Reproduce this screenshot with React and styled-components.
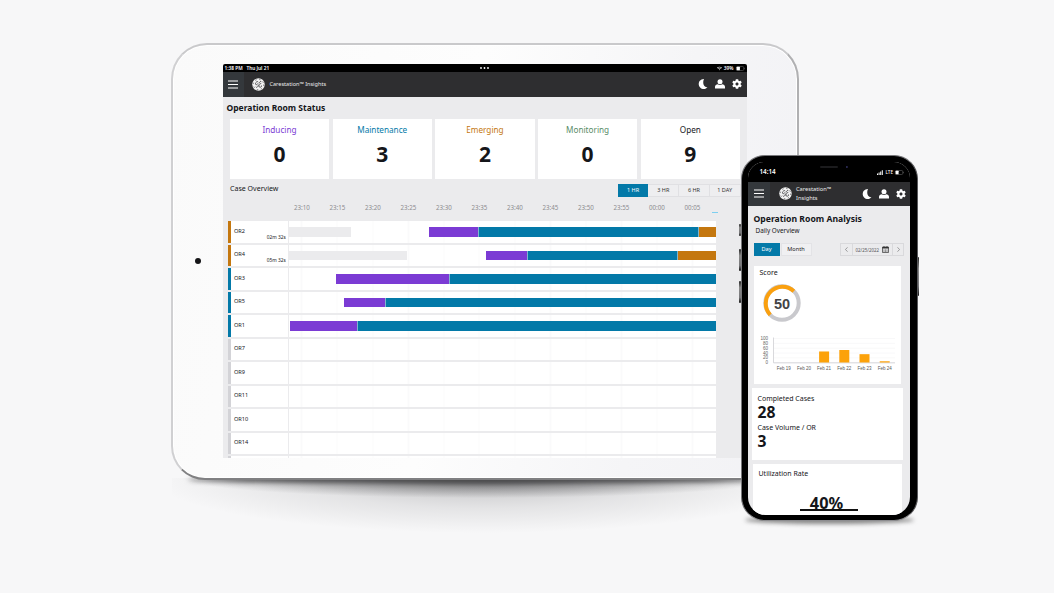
import React from "react"
import styled, { createGlobalStyle } from "styled-components"
import { FaCog, FaWifi } from "react-icons/fa"

const purple = "#7b3bd4"
const blue = "#0379a8"
const orange = "#c4770f"
const grey = "#ebebed"

const GlobalStyle = createGlobalStyle`
  * {
    box-sizing: border-box;
  }

  body {
    margin: 0;
    background: #f7f7f8;
    font-family: "Noto Sans", "Open Sans", sans-serif;
    color: #15161a;
  }
`

const Stage = styled.main`
  position: relative;
  width: 1054px;
  height: 593px;
  overflow: hidden;
  padding: 43px 0 0 171px;
  background: #f7f7f8;
`
const Tablet = styled.section`
  position: relative;
  width: 628px;
  height: 437px;
  padding: 19px 50px 0 49.5px;
  border: 2px solid;
  border-color: #c9c9cb #b0b0b2 #808082 #d0d0d2;
  border-radius: 36px 36px 32px 34px;
  background: linear-gradient(100deg, #fafafa 0%, #fdfdfd 45%, #f5f5f7 75%, #f2f2f5 100%);
  box-shadow: inset 0 0 0 1px #fff;
`
/* wide soft fall-off under the tablet with a darker line at the edge */
const TabletShadow = styled.div`
  position: absolute;
  left: 172px;
  top: 478px;
  width: 620px;
  height: 60px;
  background:
    radial-gradient(ellipse 300px 20px at 50% 0, rgba(40, 40, 42, 0.75), rgba(40, 40, 42, 0.35) 45%, transparent),
    radial-gradient(ellipse 330px 55px at 50% 0, rgba(90, 90, 94, 0.35), rgba(90, 90, 94, 0.12) 55%, transparent);
`
const EdgeShadow = styled.div`
  position: absolute;
  left: 188px;
  top: 476px;
  width: 575px;
  height: 7px;
  border-radius: 50% / 4px;
  background: #4a4a4c;
  filter: blur(2.5px);
`
const Camera = styled.i`
  position: absolute;
  left: 22px;
  top: 213px;
  width: 6px;
  height: 6px;
  border-radius: 50%;
  background: #151517;
`
const Screen = styled.div`
  display: flex;
  flex-direction: column;
  width: 524px;
  height: 394px;
  overflow: hidden;
  border-radius: 2px 2px 0 0;
  background: ${grey};

  & > * {
    flex: none;
  }
`
const StatusBar = styled.div`
  display: grid;
  grid-template-columns: 1fr auto 1fr;
  align-items: center;
  height: 8px;
  padding: 0 2px;
  background: #000;
  color: #fff;
  font-size: 4.8px;
  font-weight: 600;
  line-height: 8px;
  white-space: pre;
`
const StatusRight = styled.span`
  display: flex;
  align-items: center;
  justify-content: flex-end;
  gap: 2px;
`
const HeaderBar = styled.header`
  display: flex;
  align-items: center;
  height: 24.5px;
  padding-right: 4.5px;
  background: #2e2e30;
  color: #fff;
`
const MenuButton = styled.div`
  display: grid;
  place-items: center;
  align-self: stretch;
  width: ${(p) => (p.$phone ? "22px" : "21px")};
  background: #34383c;
`
const Brand = styled.div`
  display: flex;
  align-items: center;
  flex: 1;
  gap: 4.5px;
  padding-left: ${(p) => (p.$phone ? "9px" : "8.5px")};
  font-size: ${(p) => (p.$phone ? "5.7px" : "5.55px")};
  line-height: 9px;
  color: #ececec;
`
const Actions = styled.div`
  display: flex;
  align-items: center;
  gap: 7px;
`
const Title = styled.h1`
  margin: 0;
  font-size: ${(p) => (p.$phone ? "8.65px" : "8.5px")};
  line-height: 12px;
  font-weight: 700;
  white-space: nowrap;
`
const TabletTitle = styled(Title)`
  height: 22.5px;
  padding: 5.5px 0 4px 4px;
`
const Stats = styled.div`
  display: grid;
  grid-template-columns: repeat(5, 99.3px);
  gap: 3.4px;
  height: 59.5px;
  padding-left: 7.4px;
`
const Stat = styled.div`
  padding-top: 5px;
  background: #fff;
  text-align: center;
`
const StatLabel = styled.div`
  font-size: 8.2px;
  line-height: 12px;
  color: ${(p) => p.$color};
`
const StatValue = styled.div`
  margin-top: 5px;
  font-size: 21px;
  line-height: 27px;
  font-weight: 700;
`
const OverviewBar = styled.div`
  display: flex;
  justify-content: space-between;
  align-items: flex-start;
  height: 24px;
  padding: 4.5px 6px 0 7.5px;
  font-size: 7.05px;
  line-height: 11px;
`
const Ranges = styled.div`
  display: flex;
  margin-top: 1px;
  height: 13px;
`
const Range = styled.span`
  width: 30.7px;
  border: 1px solid ${(p) => (p.$active ? blue : "#e0e0e3")};
  border-left-width: ${(p) => (p.$active ? "1px" : "0")};
  background: ${(p) => (p.$active ? blue : "#eeeef0")};
  color: ${(p) => (p.$active ? "#fff" : "#333")};
  font-size: 5.5px;
  line-height: 11px;
  text-align: center;
`
const Times = styled.div`
  display: grid;
  grid-template-columns: repeat(12, 35.5px);
  height: 18.5px;
  padding-left: 61.6px;
  font-size: 6.2px;
  line-height: 10px;
  text-align: center;
  color: #8b8b90;
`
const Now = styled.i`
  position: absolute;
  left: 539px;
  top: 167px;
  width: 6px;
  height: 1px;
  background: #7dcff0;
`
const Rows = styled.div`
  display: flex;
  flex-direction: column;
  gap: 2px;
  padding-left: 5.5px;
`
const Row = styled.div`
  display: grid;
  grid-template-columns: 3px 58.3px 426.5px;
  height: 21.5px;
  flex: none;
`
const Marker = styled.i`
  background: ${(p) => p.$color};
`
const Room = styled.div`
  display: flex;
  flex-direction: column;
  padding: 5.5px 2.5px 0 3px;
  background: #fff;
  border-right: 1px solid ${grey};
  font-size: 5.6px;
  line-height: 8px;
`
const Elapsed = styled.span`
  align-self: flex-end;
  font-size: 4.8px;
  line-height: 5px;
`
/* faint tick every five minutes */
const Track = styled.div`
  display: grid;
  grid-template-columns: ${(p) => p.$columns};
  align-items: center;
  background:
    repeating-linear-gradient(90deg, #fafafb 0 1px, transparent 1px 35.5px) 12.5px 0,
    #fff;
`
const Segment = styled.i`
  height: 9.5px;
  background: ${(p) => p.$color};
  border-right: ${(p) => (p.$color === grey ? "0" : "1px solid #7fb6cf")};

  &:last-child {
    border-right: 0;
  }
`
const Phone = styled.section`
  position: absolute;
  left: 741px;
  top: 155px;
  width: 177px;
  height: 366px;
  padding: 6px 7px 5px 5.5px;
  border: 1.5px solid;
  border-color: #77777a #58585b #8d8d90 #77777a;
  border-radius: 24px;
  background: #000;
`
const PhoneShadow = styled.div`
  position: absolute;
  left: 745px;
  top: 516px;
  width: 169px;
  height: 8px;
  border-radius: 50%;
  background: #888;
  filter: blur(2px);
`
const SideButton = styled.i`
  position: absolute;
  left: ${(p) => p.$left}px;
  top: ${(p) => p.$top}px;
  width: 2px;
  height: ${(p) => p.$height}px;
  border-radius: 1px;
  background: linear-gradient(#222, #888 30%, #77777a 75%, #111);
`
const PhoneScreen = styled.div`
  display: flex;
  flex-direction: column;
  height: 100%;
  overflow: hidden;
  border-radius: 16px 16px 18px 18px;
  background: ${grey};

  & > * {
    flex: none;
  }
`
const PhoneStatus = styled.div`
  display: grid;
  grid-template-columns: 1fr 32px 1fr;
  height: 19.5px;
  padding: 0 6px 0 12px;
  background: #000;
  color: #fff;
  font-size: 6.3px;
  line-height: 20px;
  font-weight: 600;
`
const Speaker = styled.i`
  display: flex;
  height: 2px;
  margin-top: 3.5px;
  border-right: 2.5px solid #27274e;
  border-radius: 1px;

  &::before {
    content: "";
    width: 18px;
    margin-left: 4px;
    background: #1b1b1d;
    border-radius: 1px;
  }
`
const Signal = styled(StatusRight)`
  font-size: 4.6px;
  font-weight: 500;
`
const PhoneIntro = styled.div`
  height: 36.5px;
  padding: 7px 0 0 6px;
`
const Daily = styled.div`
  padding: 1px 0 0 2px;
  font-size: 6.35px;
  line-height: 10px;
`
const Controls = styled.div`
  display: flex;
  justify-content: space-between;
  align-items: center;
  height: 14px;
  padding: 0 6px 0 6px;
`
const Toggles = styled.div`
  display: flex;
  gap: 1px;
`
const Toggle = styled.span`
  width: ${(p) => (p.$active ? "26px" : "31px")};
  height: 13.5px;
  border: 1px solid ${(p) => (p.$active ? blue : "#e3e3e6")};
  background: ${(p) => (p.$active ? blue : "#f0f0f2")};
  color: ${(p) => (p.$active ? "#fff" : "#222")};
  font-size: 5.6px;
  line-height: 11px;
  text-align: center;
`
const DatePicker = styled.div`
  display: grid;
  grid-template-columns: 11px 1fr 11px;
  width: 64px;
  height: 12.5px;
  border: 1px solid #d9d9dc;
  color: #55565a;
  font-size: 4.4px;
`
const DateCell = styled.span`
  display: flex;
  align-items: center;
  justify-content: center;
  gap: 3.5px;

  & + & {
    border-left: 1px solid #d9d9dc;
  }
`
const Card = styled.div`
  background: #fff;
  font-size: 7px;
  line-height: 10px;
`
const ScoreCard = styled(Card)`
  height: 118px;
  margin: 9px 9.5px 0 6px;
  padding: 2px 0 0 6px;
`
const CasesCard = styled(Card)`
  height: 71.5px;
  margin: 4.5px 7.5px 0 4.5px;
  padding: 5.5px 0 0 5.5px;
`
const Figure = styled.div`
  margin-bottom: 1.5px;
  font-size: 15.7px;
  line-height: 17.5px;
  font-weight: 700;
`
const RateCard = styled(Card)`
  height: 60px;
  margin: 4px 8.5px 0 5.5px;
  padding: 5.5px 0 0 5.5px;
`
const Rate = styled.div`
  width: 58px;
  height: 18.5px;
  margin: 13.5px 0 0 41px;
  padding-right: 4px;
  border-bottom: 2px solid #111;
  font-size: 16.3px;
  line-height: 21.5px;
  font-weight: 700;
  text-align: center;
`
const Svg = styled.svg`
  display: block;
  flex: none;
  overflow: visible;
`
const GaugeSvg = styled(Svg)`
  margin: 6px 0 0 3.5px;
  font: 700 14.5px "Liberation Sans", sans-serif;
`
const ChartSvg = styled(Svg)`
  margin-top: 12px;
  font: 4.5px "Liberation Sans", sans-serif;
`

const stats = [
  { label: "Inducing", value: 0, color: purple },
  { label: "Maintenance", value: 3, color: blue },
  { label: "Emerging", value: 2, color: orange },
  { label: "Monitoring", value: 0, color: "#588c68" },
  { label: "Open", value: 9, color: "#15161a" },
]

const times = [
  "23:10", "23:15", "23:20", "23:25", "23:30", "23:35",
  "23:40", "23:45", "23:50", "23:55", "00:00", "00:05",
]

// segments are [width, color], the last one fills the track
const rows = [
  { name: "OR2", mark: orange, elapsed: "02m 32s", segments: [[61.5, grey], [78.5], [49.5, purple], [220.5, blue], [0, orange]] },
  { name: "OR4", mark: orange, elapsed: "05m 32s", segments: [[118, grey], [78.5], [42.5, purple], [149.5, blue], [0, orange]] },
  { name: "OR3", mark: blue, segments: [[47], [114, purple], [0, blue]] },
  { name: "OR5", mark: blue, segments: [[54.5], [42.5, purple], [0, blue]] },
  { name: "OR1", mark: blue, segments: [[0.5], [68.5, purple], [0, blue]] },
  { name: "OR7" },
  { name: "OR9" },
  { name: "OR11" },
  { name: "OR10" },
  { name: "OR14" },
  { name: "" },
]

const scores = [
  { day: "Feb 19", value: 0 },
  { day: "Feb 20", value: 0 },
  { day: "Feb 21", value: 45 },
  { day: "Feb 22", value: 51 },
  { day: "Feb 23", value: 34 },
  { day: "Feb 24", value: 5 },
]

const Burger = () => (
  <Svg width="10" height="9" viewBox="0 0 10 9">
    <path d="M0 1h10M0 4.5h10M0 8h10" stroke="#fff" strokeWidth="1.2" />
  </Svg>
)

const Logo = () => (
  <Svg width="13" height="13" viewBox="0 0 26 26" fill="none" stroke="#2e2e30">
    <circle cx="13" cy="13" r="12.5" fill="#f2f2f3" stroke="none" />
    <circle cx="13" cy="13" r="10.3" strokeWidth="1.1" strokeDasharray="3 5.1" />
    <path
      strokeWidth="1.5"
      d="M12.5 8.5C11 5 6.5 9 7 12s4.5.5 5-1.5M7.5 17.5c2 3 5.5-.5 5-4.5M19 8c-1.5-2.5-5 0-3.5 2.5 1 1.5 3 .5 3-.5M15.5 12.5c-2.5 2-2 6 .5 6s4-2 3-3.5"
    />
  </Svg>
)

const Moon = ({ size }) => (
  <Svg width={size} height={size} viewBox="0 0 20 20" fill="#fff">
    <path d="M12 0A10 10 0 1 0 19 16.500C12.500 17.500 8 8.500 12 0Z" />
  </Svg>
)

const User = ({ size }) => (
  <Svg width={size} height={size} viewBox="0 0 20 20" fill="#fff">
    <circle cx="10" cy="5.5" r="5" />
    <path d="M0 19v-3.500C0 12 3 10.500 5.500 10.300c2.500 2.200 6.500 2.200 9 0C17 10.500 20 12 20 15.500V19Z" />
  </Svg>
)

const Battery = ({ level }) => (
  <Svg width="9" height="5" viewBox="0 0 9 5">
    <rect x=".3" y=".5" width="7.4" height="4" rx="1" fill="none" stroke="#777" strokeWidth=".5" />
    <rect x=".6" y=".8" width={level} height="3.4" rx=".5" fill="#fff" />
    <path d="M8.5 1.8v1.4" stroke="#777" strokeWidth=".5" />
  </Svg>
)

const Header = ({ phone, children }) => (
  <HeaderBar>
    <MenuButton $phone={phone}>
      <Burger />
    </MenuButton>
    <Brand $phone={phone}>
      <Logo />
      <span>{children}</span>
    </Brand>
    <Actions>
      <Moon size={10} />
      <User size={10} />
      <FaCog size={10} />
    </Actions>
  </HeaderBar>
)

const CaseRow = ({ name, mark = "#d3d3d7", elapsed, segments = [] }) => (
  <Row>
    <Marker $color={mark} />
    <Room>
      {name}
      {elapsed && <Elapsed>{elapsed}</Elapsed>}
    </Room>
    <Track $columns={segments.map(([width]) => (width ? `${width}px` : "1fr")).join(" ")}>
      {segments.map(([, color], i) =>
        color ? <Segment key={i} $color={color} /> : <span key={i} />
      )}
    </Track>
  </Row>
)

const Gauge = () => (
  <GaugeSvg width="38" height="38" viewBox="0 0 38 38">
    <g fill="none" strokeWidth="4">
      <circle cx="19" cy="19" r="16.7" stroke="#c9c9cd" />
      <path d="M7.2 30.8A16.7 16.7 0 0 1 30.8 7.2" stroke="#faa00f" />
    </g>
    <text x="19" y="25" textAnchor="middle" fill="#444">
      50
    </text>
  </GaugeSvg>
)

const ScoreChart = () => (
  <ChartSvg width="136" height="40" viewBox="0 0 136 40">
    {[100, 80, 60, 40, 20, 0].map((tick, i) => (
      <g key={tick}>
        <text x="8" y={6 + i * 4.85} textAnchor="end" fill="#666">
          {tick}
        </text>
        <path d={`M13.5 ${4.5 + i * 4.85}H135`} stroke="#f3f3f5" strokeWidth=".6" />
      </g>
    ))}
    <path d="M13.5 3.5v25.3H135" fill="none" stroke="#cfcfd3" strokeWidth=".8" />
    {scores.map(({ day, value }, i) => (
      <g key={day}>
        <rect x={18.7 + i * 20.2} y={28.5 - value * 0.245} width="10" height={value * 0.245} fill="#fca20a" />
        <text x={23.7 + i * 20.2} y="36" textAnchor="middle" fill="#555">
          {day}
        </text>
      </g>
    ))}
  </ChartSvg>
)

const Calendar = () => (
  <Svg width="7" height="7" viewBox="0 0 14 14">
    <path d="M1 2h12v11H1ZM4 0v3M10 0v3" fill="none" stroke="#333" strokeWidth="1.4" />
    <path d="M1 2h12v3H1Z" fill="#333" />
    <path d="M3 8h8M3 10.5h8" stroke="#333" strokeWidth="1.3" strokeDasharray="2 1" />
  </Svg>
)

const Chevron = ({ right }) => (
  <Svg width="3" height="5" viewBox="0 0 3 5">
    <path d={right ? "M.5.3 2.5 2.5.5 4.7" : "M2.5.3.5 2.5 2.5 4.7"} fill="none" stroke="#666" strokeWidth=".6" />
  </Svg>
)

const TabletDevice = () => (
  <Tablet>
    <Camera />
    <Screen>
      <StatusBar>
        <span>1:38 PM   Thu Jul 21</span>
        <Svg width="9" height="2" viewBox="0 0 9 2" fill="#fff">
          <circle cx="1" cy="1" r=".9" />
          <circle cx="4.5" cy="1" r=".9" />
          <circle cx="8" cy="1" r=".9" />
        </Svg>
        <StatusRight>
          <FaWifi size={5} />
          39%
          <Battery level={3.3} />
        </StatusRight>
      </StatusBar>
      <Header>Carestation™ Insights</Header>
      <TabletTitle>Operation Room Status</TabletTitle>
      <Stats>
        {stats.map(({ label, value, color }) => (
          <Stat key={label}>
            <StatLabel $color={color}>{label}</StatLabel>
            <StatValue>{value}</StatValue>
          </Stat>
        ))}
      </Stats>
      <OverviewBar>
        Case Overview
        <Ranges>
          <Range $active>1 HR</Range>
          <Range>3 HR</Range>
          <Range>6 HR</Range>
          <Range>1 DAY</Range>
        </Ranges>
      </OverviewBar>
      <Times>
        {times.map((time) => (
          <span key={time}>{time}</span>
        ))}
      </Times>
      <Rows>
        {rows.map((row, i) => (
          <CaseRow key={i} {...row} />
        ))}
      </Rows>
      <Now />
    </Screen>
  </Tablet>
)

const PhoneDevice = () => (
  <Phone>
    <PhoneScreen>
      <PhoneStatus>
        <span>14:14</span>
        <Speaker />
        <Signal>
          <Svg width="6" height="5" viewBox="0 0 6 5" fill="#fff">
            <path d="M0 3.5h1V5H0ZM1.6 2.6h1V5h-1ZM3.2 1.5h1V5h-1ZM4.8.3h1V5h-1Z" />
          </Svg>
          LTE
          <Battery level={3} />
        </Signal>
      </PhoneStatus>
      <Header phone>
        Carestation™
        <br />
        Insights
      </Header>
      <PhoneIntro>
        <Title $phone>Operation Room Analysis</Title>
        <Daily>Daily Overview</Daily>
      </PhoneIntro>
      <Controls>
        <Toggles>
          <Toggle $active>Day</Toggle>
          <Toggle>Month</Toggle>
        </Toggles>
        <DatePicker>
          <DateCell>
            <Chevron />
          </DateCell>
          <DateCell>
            02/25/2022
            <Calendar />
          </DateCell>
          <DateCell>
            <Chevron right />
          </DateCell>
        </DatePicker>
      </Controls>
      <ScoreCard>
        Score
        <Gauge />
        <ScoreChart />
      </ScoreCard>
      <CasesCard>
        Completed Cases
        <Figure>28</Figure>
        Case Volume / OR
        <Figure>3</Figure>
      </CasesCard>
      <RateCard>
        Utilization Rate
        <Rate>40%</Rate>
      </RateCard>
    </PhoneScreen>
  </Phone>
)

const App = () => {
  return (
    <>
      <GlobalStyle />
      <Stage>
        <TabletShadow />
        <EdgeShadow />
        <TabletDevice />
        <PhoneShadow />
        <SideButton $left={739} $top={224} $height={12} />
        <SideButton $left={739} $top={249} $height={22} />
        <SideButton $left={739} $top={281} $height={22} />
        <SideButton $left={917} $top={257} $height={39} />
        <PhoneDevice />
      </Stage>
    </>
  )
}

export default App
